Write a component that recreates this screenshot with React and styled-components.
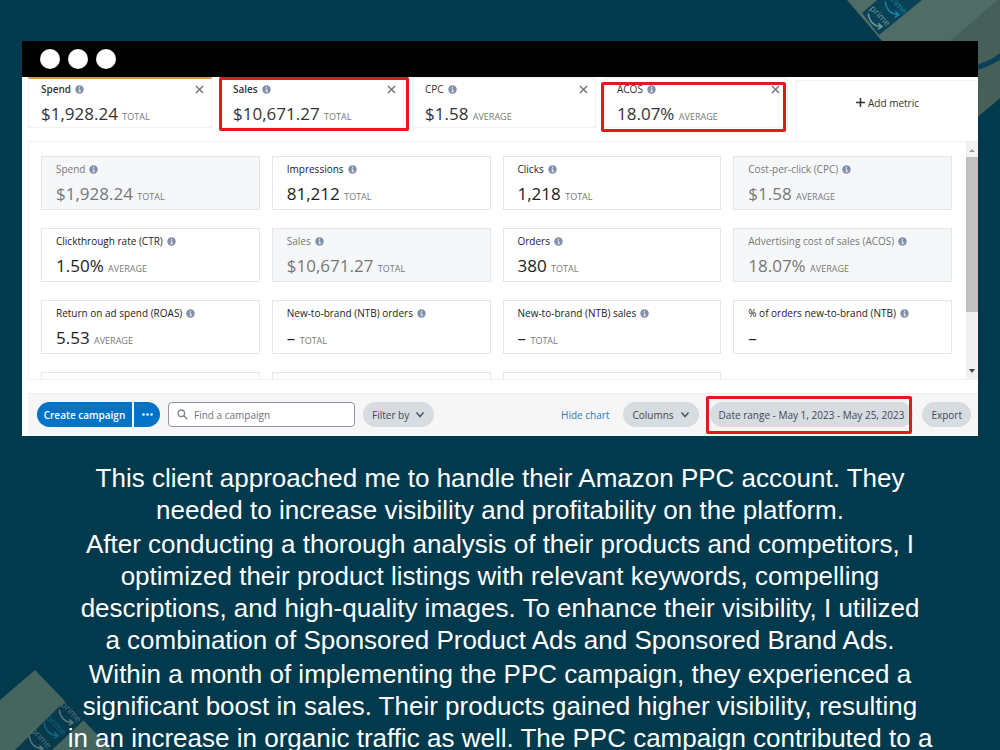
import styled, { createGlobalStyle, css } from "styled-components";

const tabs = [
	{ name: "Spend", value: "$1,928.24", unit: "TOTAL", accent: "#d9964a" },
	{ name: "Sales", value: "$10,671.27", unit: "TOTAL", accent: "#5b5f92", mark: "wide" },
	{ name: "CPC", value: "$1.58", unit: "AVERAGE" },
	{ name: "ACOS", value: "18.07%", unit: "AVERAGE", mark: "shifted" },
];

const metrics = [
	{ name: "Spend", value: "$1,928.24", unit: "TOTAL", used: true },
	{ name: "Impressions", value: "81,212", unit: "TOTAL" },
	{ name: "Clicks", value: "1,218", unit: "TOTAL" },
	{ name: "Cost-per-click (CPC)", value: "$1.58", unit: "AVERAGE", used: true },
	{ name: "Clickthrough rate (CTR)", value: "1.50%", unit: "AVERAGE" },
	{ name: "Sales", value: "$10,671.27", unit: "TOTAL", used: true },
	{ name: "Orders", value: "380", unit: "TOTAL" },
	{ name: "Advertising cost of sales (ACOS)", value: "18.07%", unit: "AVERAGE", used: true },
	{ name: "Return on ad spend (ROAS)", value: "5.53", unit: "AVERAGE" },
	{ name: "New-to-brand (NTB) orders", value: "–", unit: "TOTAL" },
	{ name: "New-to-brand (NTB) sales", value: "–", unit: "TOTAL" },
	{ name: "% of orders new-to-brand (NTB)", value: "–" },
];

function InfoIcon() {
	return (
		<Info viewBox="0 0 10 10" aria-hidden="true">
			<circle cx="5" cy="5" r="4.7" fill="#8190a8" />
			<path d="M4 4.4h1.3v3M4 7.4h2.4M5 2v1.3" stroke="#f2f4f8" strokeWidth="1.1" fill="none" />
		</Info>
	);
}

function Chevron() {
	return (
		<Arrow viewBox="0 0 10 8" aria-hidden="true">
			<path d="M1.5 1.5 5 5.5 8.5 1.5" fill="none" stroke="#4a5466" strokeWidth="1.5" />
		</Arrow>
	);
}

function Metric({ name, value, unit }) {
	return (
		<>
			<Name>
				{name}
				<InfoIcon />
			</Name>
			<Amount>
				{value} {unit && <Unit>{unit}</Unit>}
			</Amount>
		</>
	);
}

function Logo({ x, y, color }) {
	return (
		<g transform={`translate(${x} ${y}) rotate(46)`}>
			<text fill={color} fontSize="9" textAnchor="middle">prime</text>
			<path d="M-10 4Q0 11 8 4M4 3.5l5-.5-1 5" fill="none" stroke={color} strokeWidth="1.5" />
		</g>
	);
}

function BoxTop() {
	return (
		<TopArt viewBox="0 0 160 150" aria-hidden="true">
			<path d="M7 0H160V98L110 140 42 41Z" fill="#4f6c66" />
			<path d="M160 -2V98L110 140V41Z" fill="#465f58" />
			<path d="M22 13 37 0H82L39 35Z" fill="#0a4156" />
			<path d="M110 70Q145 66 160 53V60Q140 72 110 76Z" fill="#0a4058" />
			<Logo x={38} y={18} color="#6d9598" />
			<Logo x={55} y={6} color="#1681a8" />
		</TopArt>
	);
}

function BoxBottom() {
	return (
		<BottomArt viewBox="0 0 120 80" aria-hidden="true">
			<path d="M0 30 35 0 112 80H0Z" fill="#46655f" />
			<path d="M15 80 65 31 85 49 52 80Z" fill="#073a4c" />
			<Logo x={69} y={44} color="#55757a" />
			<Logo x={54} y={57} color="#0f6585" />
			<Logo x={39} y={70} color="#55757a" />
		</BottomArt>
	);
}

export default function App() {
	return (
		<Page>
			<GlobalStyle />
			<BoxTop />
			<BoxBottom />
			<Browser>
				<TitleBar>
					<Dot />
					<Dot />
					<Dot />
				</TitleBar>
				<Tabs>
					{tabs.map((tab, i) => (
						<Tab key={tab.name} $accent={tab.accent} $bold={i < 2}>
							<Metric {...tab} />
							<Close type="button" aria-label={`Remove ${tab.name}`}>
								<svg width="9" height="9" viewBox="0 0 9 9" aria-hidden="true">
									<path d="M1 1l7 7M8 1 1 8" stroke="#777" strokeWidth="1.5" />
								</svg>
							</Close>
							{tab.mark && <TabMark $kind={tab.mark} />}
						</Tab>
					))}
					<AddCell>
						<AddMetric type="button">
							<svg width="9" height="9" viewBox="0 0 9 9" aria-hidden="true">
								<path d="M4.5 0v9M0 4.5h9" stroke="#333" strokeWidth="1.5" />
							</svg>
							Add metric
						</AddMetric>
					</AddCell>
				</Tabs>
				<Panel>
					<Grid>
						{metrics.map((metric) => (
							<Card key={metric.name} $used={metric.used}>
								<Metric {...metric} />
							</Card>
						))}
						<Card />
						<Card />
						<Card />
					</Grid>
					<ScrollBar aria-hidden="true">
						<svg width="12" height="15" viewBox="0 0 12 15">
							<path d="M3 10 6 7l3 3Z" fill="#999" />
						</svg>
						<Thumb />
						<svg width="12" height="15" viewBox="0 0 12 15">
							<path d="M3 5h6L6 9Z" fill="#444" />
						</svg>
					</ScrollBar>
				</Panel>
				<Toolbar>
					<Split>
						<Create type="button">Create campaign</Create>
						<More type="button" aria-label="More actions">
							<svg width="11" height="3" viewBox="0 0 11 3" aria-hidden="true">
								<g fill="#fff">
									<circle cx="1.5" cy="1.5" r="1.3" />
									<circle cx="5.5" cy="1.5" r="1.3" />
									<circle cx="9.5" cy="1.5" r="1.3" />
								</g>
							</svg>
						</More>
					</Split>
					<Search>
						<svg width="11" height="11" viewBox="0 0 11 11" aria-hidden="true">
							<g fill="none" stroke="#7c8592" strokeWidth="1.4">
								<circle cx="4.3" cy="4.3" r="3.3" />
								<path d="M6.8 6.8 10.3 10.3" />
							</g>
						</svg>
						<input type="text" placeholder="Find a campaign" aria-label="Find a campaign" />
					</Search>
					<Pill type="button">
						Filter by <Chevron />
					</Pill>
					<HideChart href="#chart">Hide chart</HideChart>
					<Pill type="button">
						Columns <Chevron />
					</Pill>
					<DateRange>
						<Pill type="button">Date range - May 1, 2023 - May 25, 2023</Pill>
					</DateRange>
					<Pill type="button">Export</Pill>
				</Toolbar>
			</Browser>
			<Story>
				<p>
					This client approached me to handle their Amazon PPC account. They
					<br />
					needed to increase visibility and profitability on the platform.
				</p>
				<p>
					After conducting a thorough analysis of their products and competitors, I
					<br />
					optimized their product listings with relevant keywords, compelling
					<br />
					descriptions, and high-quality images. To enhance their visibility, I utilized
					<br />
					a combination of Sponsored Product Ads and Sponsored Brand Ads.
				</p>
				<p>
					Within a month of implementing the PPC campaign, they experienced a
					<br />
					significant boost in sales. Their products gained higher visibility, resulting
					<br />
					in an increase in organic traffic as well. The PPC campaign contributed to a
				</p>
			</Story>
		</Page>
	);
}

const GlobalStyle = createGlobalStyle`
	* {
		box-sizing: border-box;
	}
	body {
		margin: 0;
		background: #01394d;
	}
	button, input {
		font: inherit;
		color: inherit;
		border: 0;
		padding: 0;
		margin: 0;
		background: none;
	}
	button {
		cursor: pointer;
	}
`;
const Page = styled.main`
	position: relative;
	height: 100vh;
	overflow: hidden;
	padding: 41px 22px 0;
	background: #01394d;
`;
const artwork = css`
	position: absolute;
	font-family: "Open Sans", sans-serif;
`;
const TopArt = styled.svg`
	${artwork}
	top: 0;
	right: 0;
	width: 160px;
	height: 150px;
`;
const BottomArt = styled.svg`
	${artwork}
	bottom: 0;
	left: 0;
	width: 120px;
	height: 80px;
`;
const Browser = styled.section`
	position: relative;
	background: white;
	color: #333;
	font-family: "Open Sans", sans-serif;
	font-size: 10px;
	line-height: 14px;
`;
const TitleBar = styled.div`
	display: flex;
	align-items: center;
	gap: 8px;
	height: 36px;
	padding-left: 18px;
	background: black;
`;
const Dot = styled.span`
	width: 20px;
	height: 20px;
	border-radius: 50%;
	background: white;
`;
const Tabs = styled.div`
	display: grid;
	grid-template-columns: repeat(4, 192fr) 182fr;
	height: 64px;
	padding-left: 6px;
`;
const Amount = styled.div`
	margin-top: 8px;
	font-size: 17px;
	font-weight: 400;
	line-height: 20px;
`;
const Tab = styled.div`
	position: relative;
	height: 51px;
	margin-right: 8px;
	padding: 3px 12px;
	border: 1px solid #f1f1f1;
	border-top: 2px solid ${(props) => props.$accent || "#f6f6f6"};
	font-weight: ${(props) => (props.$bold ? 600 : 400)};
`;
const AddCell = styled.div`
	display: flex;
	align-items: center;
	justify-content: center;
	margin-top: 3px;
	padding-bottom: 17px;
	border: solid #f1f1f1;
	border-width: 1px 0 0 1px;
`;
const AddMetric = styled.button`
	display: flex;
	align-items: center;
	gap: 3px;
`;
const Close = styled.button`
	position: absolute;
	top: 6px;
	right: 7px;
	display: flex;
`;
const redFrame = css`
	position: absolute;
	border: 3px solid #e3191b;
	border-radius: 2px;
	pointer-events: none;
`;
const TabMark = styled.span`
	${redFrame}
	inset: ${(props) => (props.$kind === "wide" ? "-2px -6px -4px -2px" : "3px 1px -5px -4px")};
`;
const Name = styled.div`
	display: flex;
	align-items: center;
	gap: 4px;
`;
const Info = styled.svg`
	width: 9px;
	height: 9px;
`;
const Unit = styled.small`
	color: #777;
	font-size: 9px;
`;
const Panel = styled.div`
	display: flex;
	height: 239px;
	margin-left: 6px;
	border: solid #f1f1f1;
	border-width: 1px 0 1px 1px;
`;
const Grid = styled.div`
	flex: 1;
	display: grid;
	grid-template-columns: repeat(4, 1fr);
	grid-auto-rows: 54px;
	gap: 18px 12px;
	padding: 14px 14px 0 12px;
	overflow: hidden;
`;
const Card = styled.div`
	padding: 5px 14px;
	border: 1px solid #e4e6e8;
	color: ${(props) => (props.$used ? "#777" : "#222")};
	background: ${(props) => (props.$used ? "#f6f7f9" : "white")};
`;
const ScrollBar = styled.div`
	display: flex;
	flex-direction: column;
	justify-content: space-between;
	width: 12px;
	background: #f1f1f1;
`;
const Thumb = styled.span`
	height: 155px;
	margin-bottom: auto;
	background: #c1c1c1;
`;
const Toolbar = styled.div`
	display: flex;
	align-items: center;
	height: 43px;
	margin: 13px 0 0 6px;
	padding: 0 7px 1px 9px;
	border-top: 1px solid #eee;
	background: #f6f6f7;
`;
const Split = styled.div`
	display: flex;
	gap: 2px;
	margin-right: 8px;
	color: white;
	font-weight: 600;
`;
const Create = styled.button`
	width: 95px;
	height: 25px;
	border-radius: 13px 0 0 13px;
	background: #0073c7;
`;
const More = styled.button`
	display: flex;
	align-items: center;
	justify-content: center;
	width: 26px;
	height: 25px;
	border-radius: 0 13px 13px 0;
	background: #0073c7;
`;
const Search = styled.label`
	display: flex;
	align-items: center;
	gap: 6px;
	width: 187px;
	height: 25px;
	margin-right: 8px;
	padding: 0 8px;
	border: 1px solid #8d96a3;
	border-radius: 4px;
	background: white;

	input {
		flex: 1;
		min-width: 0;
		outline: none;
	}
	input::placeholder {
		color: #6d7279;
	}
`;
const Pill = styled.button`
	display: flex;
	align-items: center;
	gap: 6px;
	height: 25px;
	padding: 0 9px;
	border-radius: 13px;
	background: #d6dce0;
	color: #3f4858;
	white-space: nowrap;
`;
const Arrow = styled.svg`
	width: 10px;
	height: 8px;
`;
const HideChart = styled.a`
	margin: 0 14px 0 auto;
	color: #2a7ab5;
	text-decoration: none;
`;
const DateRange = styled.div`
	position: relative;
	margin: 0 9px 0 11px;

	&::after {
		${redFrame}
		content: "";
		inset: -6px 1px -7px -4px;
	}
`;
const Story = styled.article`
	position: relative;
	display: flex;
	flex-direction: column;
	gap: 2px;
	margin: 26px 30px 0;
	color: white;
	font-family: "Liberation Sans", Arial, sans-serif;
	font-size: 26px;
	line-height: 32px;
	text-align: center;

	p {
		margin: 0;
	}
`;
